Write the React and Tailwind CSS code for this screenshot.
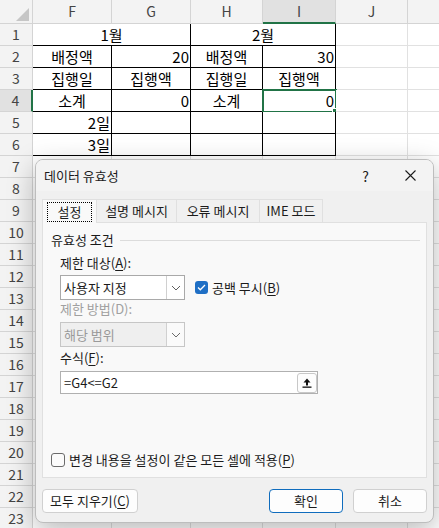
import React from 'react';

const cols = ['F', 'G', 'H', 'I', 'J', ''];

// F1:I6 block with black borders
const tableRows = [
  [{ t: '1월', span: 2 }, { t: '2월', span: 2 }],
  [{ t: '배정액' }, { t: '20', r: true }, { t: '배정액' }, { t: '30', r: true }],
  [{ t: '집행일' }, { t: '집행액' }, { t: '집행일' }, { t: '집행액' }],
  [{ t: '소계' }, { t: '0', r: true }, { t: '소계' }, { t: '0', r: true, sel: true }],
  [{ t: '2일', r: true }, {}, {}, {}],
  [{ t: '3일', r: true }, {}, {}, {}],
];

const Cell = ({ t, r, span, sel, black }) => (
  <div
    className={`relative flex items-center border-r border-b text-[15px] leading-[20px] text-black bg-white ${
      black ? 'border-black' : 'border-[#e1e1e1]'
    } ${r ? 'justify-end pr-[1px]' : 'justify-center'} ${span === 2 ? 'col-span-2' : ''}`}
  >
    {t}
    {sel && (
      <>
        <div className="absolute -left-[1px] -top-[1px] h-[24px] w-[75px] border-2 border-[#217346]" />
        <div className="absolute -bottom-[3px] -right-[3px] h-[6px] w-[6px] border border-white bg-[#217346]" />
      </>
    )}
  </div>
);

const Sheet = () => {
  const rows = [];
  for (let n = 1; n <= 23; n++) {
    const data = tableRows[n - 1];
    rows.push(
      <React.Fragment key={n}>
        <div
          className={`flex items-center justify-center border-b border-[#d4d4d4] text-[14px] text-[#444] ${
            n === 4 ? 'border-r-2 border-r-[#217346] bg-[#e1e1e1]' : 'border-r bg-[#f3f3f3]'
          }`}
        >
          {n}
        </div>
        {data
          ? data.map((c, i) => <Cell key={i} {...c} black />)
          : [0, 1, 2, 3].map((i) => <Cell key={i} />)}
        <Cell />
        <Cell />
      </React.Fragment>
    );
  }
  return (
    <div className="grid grid-cols-[33px_79px_79px_72px_73px_72px_72px] grid-rows-[24px_repeat(23,22px)]">
      <div className="relative border-r border-b border-[#d4d4d4] bg-[#f3f3f3]">
        <svg className="absolute right-[3px] bottom-[2px]" width="13" height="13" viewBox="0 0 13 13">
          <polygon points="13,0 13,13 0,13" fill="#c6c6c6" />
        </svg>
      </div>
      {cols.map((c, i) => (
        <div
          key={i}
          className={`flex items-center justify-center border-r border-[#d4d4d4] text-[14px] text-[#444] ${
            c === 'I' ? 'border-b-2 border-b-[#217346] bg-[#e1e1e1]' : 'border-b bg-[#f3f3f3]'
          }`}
        >
          {c}
        </div>
      ))}
      {rows}
    </div>
  );
};

const U = ({ children }) => <span className="underline underline-offset-2">{children}</span>;

const Chevron = ({ color = '#5f5f5f' }) => (
  <svg width="10" height="6" viewBox="0 0 10 6">
    <path d="M1 1l4 4 4-4" fill="none" stroke={color} strokeWidth="1" />
  </svg>
);

const Check = ({ checked }) =>
  checked ? (
    <div className="flex h-[13px] w-[13px] items-center justify-center rounded-[3px] bg-[#1f6fc5]">
      <svg width="9" height="7" viewBox="0 0 9 7">
        <path d="M1 3.5l2.3 2.3L8 1" fill="none" stroke="white" strokeWidth="1.3" />
      </svg>
    </div>
  ) : (
    <div className="h-[14px] w-[14px] rounded-[3px] border border-[#6b6b6b] bg-[#fbfbfb]" />
  );

const tabs = [
  { t: '설정', w: 'w-[55px]', sel: true },
  { t: '설명 메시지', w: 'w-[80px]' },
  { t: '오류 메시지', w: 'w-[83px]' },
  { t: 'IME 모드', w: 'w-[63px]' },
];

const Dialog = () => (
  <div className="absolute left-[35px] top-[159px] flex h-[364px] w-[399px] flex-col overflow-hidden rounded-[8px] border border-[#bdbdbd] bg-[#f0f0f0] text-[13px] leading-[16px] text-[#1b1b1b] shadow-[0_8px_28px_rgba(0,0,0,0.28)]">
    <div className="flex h-[31px] shrink-0 items-center justify-between bg-[#f3f3f3] pl-[8px] pr-[17px]">
      <span>데이터 유효성</span>
      <div className="flex items-center gap-[36px]">
        <span className="text-[14px]">?</span>
        <svg width="11" height="11" viewBox="0 0 11 11">
          <path d="M0.5 0.5l10 10M10.5 0.5l-10 10" stroke="#1b1b1b" strokeWidth="1.1" />
        </svg>
      </div>
    </div>

    <div className="flex flex-col px-[6px] pt-[8px]">
      <div className="flex h-[23px] items-start">
        {tabs.map((tab, i) => (
          <div
            key={i}
            className={`relative flex items-center justify-center border-t border-r border-[#e0e0e0] ${tab.w} ${
              i === 0 ? 'border-l' : ''
            } ${tab.sel ? 'z-10 h-[24px] bg-[#f9f9f9]' : 'h-[23px] bg-[#f0f0f0]'}`}
          >
            {tab.t}
            {tab.sel && (
              <div className="absolute left-[4px] right-[4px] top-[2px] bottom-[1px] border border-dotted border-black" />
            )}
          </div>
        ))}
      </div>

      <div className="flex h-[256px] flex-col border border-[#e0e0e0] bg-[#f9f9f9] pl-[8px] pr-[6px]">
        <div className="mt-[9px] flex items-center gap-[6px]">
          <span>유효성 조건</span>
          <div className="h-px flex-1 bg-[#dcdcdc]" />
        </div>

        <div className="pl-[9px]">
          <div className="mt-[7px]">
            제한 대상(<U>A</U>):
          </div>
          <div className="mt-[4px] flex items-center">
            <div className="flex h-[25px] w-[125px] items-stretch border border-[#a9a9a9] bg-white">
              <div className="flex flex-1 items-center pl-[3px] text-[13px]">사용자 지정</div>
              <div className="flex w-[18px] items-center justify-center border-l border-[#d0d0d0]">
                <Chevron />
              </div>
            </div>
            <div className="ml-[10px] flex items-center gap-[4px]">
              <Check checked />
              <span>
                공백 무시(<U>B</U>)
              </span>
            </div>
          </div>

          <div className="mt-[1px] text-[#a0a0a0]">제한 방법(D):</div>
          <div className="mt-[5px] flex h-[25px] w-[125px] items-stretch border border-[#c6c6c6] bg-[#efefef]">
            <div className="flex flex-1 items-center pl-[3px] text-[13px] text-[#9a9a9a]">해당 범위</div>
            <div className="flex w-[18px] items-center justify-center border-l border-[#d0d0d0] bg-[#fafafa]">
              <Chevron color="#6b6b6b" />
            </div>
          </div>

          <div className="mt-[3px]">
            수식(<U>F</U>):
          </div>
          <div className="mt-[5px] flex h-[23px] w-[258px] items-center border border-[#b0b0b0] bg-white">
            <div className="flex-1 pl-[3px] text-[13px]">=G4&lt;=G2</div>
            <div className="flex h-[20px] w-[20px] items-center justify-center rounded-[3px] border border-[#c8c8c8] bg-[#fdfdfd]">
              <svg width="12" height="12" viewBox="0 0 12 12">
                <path d="M6 1.5L2.5 5.5h2.5v3h2v-3h2.5z" fill="#111" />
                <rect x="1.5" y="9.5" width="9" height="1.3" fill="#111" />
              </svg>
            </div>
          </div>
        </div>

        <div className="mt-[58px] flex items-center gap-[4px]">
          <Check />
          <span>
            변경 내용을 설정이 같은 모든 셀에 적용(<U>P</U>)
          </span>
        </div>
      </div>

      <div className="mt-[11px] flex items-center">
        <button className="h-[24px] w-[96px] rounded-[4px] border border-[#d0d0d0] bg-[#fdfdfd] text-[13px]">
          모두 지우기(<U>C</U>)
        </button>
        <button className="ml-auto h-[24px] w-[74px] rounded-[4px] border border-[#0f6cbd] bg-[#fdfdfd] text-[13px]">
          확인
        </button>
        <button className="ml-[10px] h-[24px] w-[74px] rounded-[4px] border border-[#d0d0d0] bg-[#fdfdfd] text-[13px]">
          취소
        </button>
      </div>
    </div>
  </div>
);

export default function App() {
  return (
    <div className="relative h-[528px] w-[439px] overflow-hidden bg-white font-['Noto_Sans_CJK_KR',sans-serif]">
      <Sheet />
      <Dialog />
    </div>
  );
}
